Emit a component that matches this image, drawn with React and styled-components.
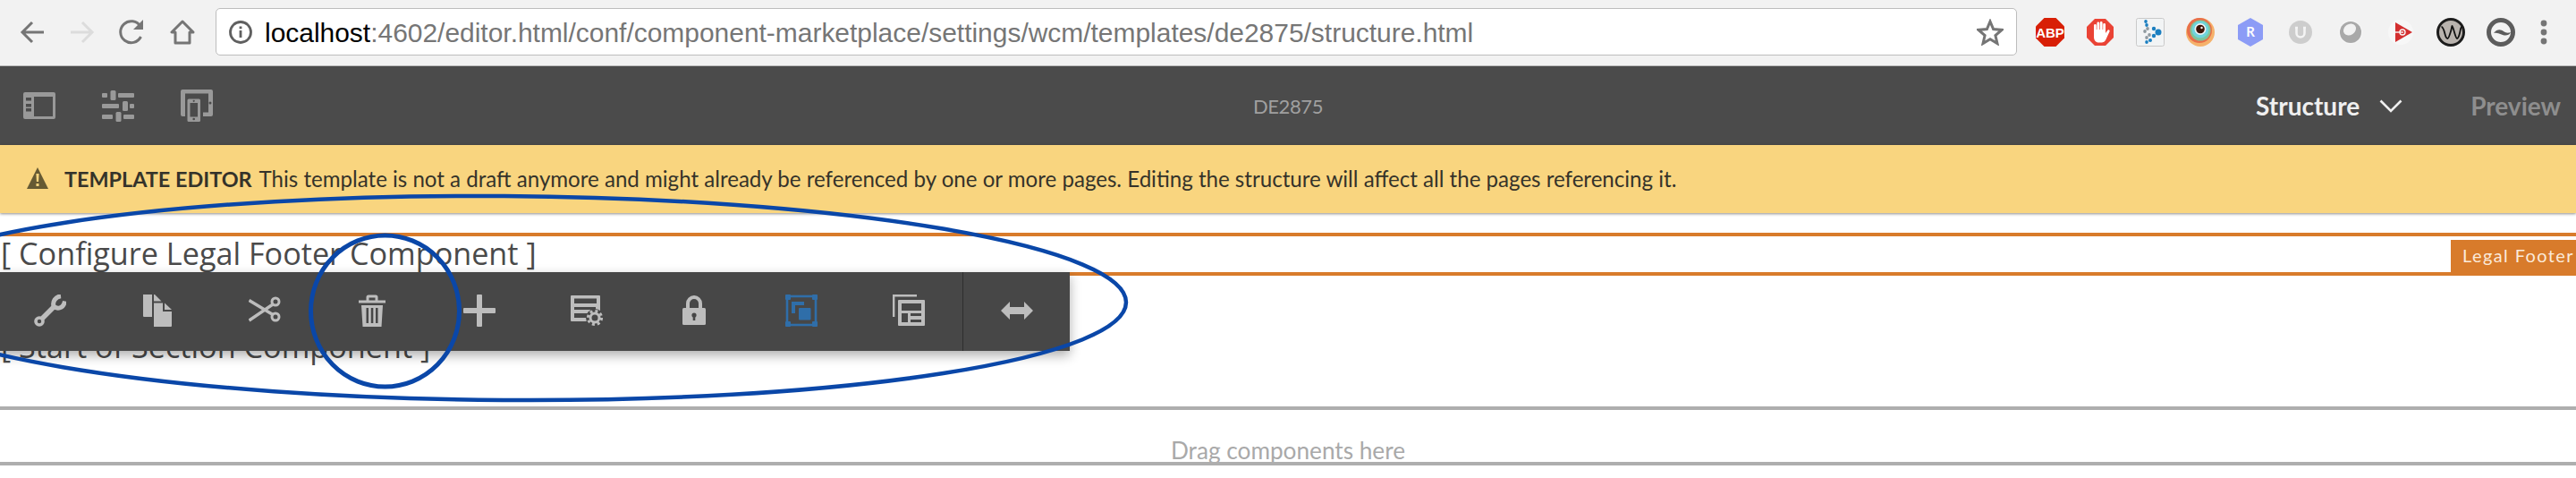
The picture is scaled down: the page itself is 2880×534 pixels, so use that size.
import React from "react";
import styled, { createGlobalStyle } from "styled-components";

const GlobalStyle = createGlobalStyle`
  html, body {
    margin: 0;
    padding: 0;
    background: #fff;
  }
`;

const Page = styled.div`
  position: relative;
  width: 2880px;
  height: 534px;
  overflow: hidden;
  background: #fff;
  font-family: "Lato", "Liberation Sans", sans-serif;
`;

const BrowserBar = styled.div`
  display: flex;
  align-items: center;
  box-sizing: border-box;
  height: 74px;
  padding: 0 16px 2px 8px;
  background: #f2f2f2;
  border-bottom: 1px solid #bcbcbc;
`;

const NavSlot = styled.div`
  display: flex;
  align-items: center;
  justify-content: center;
  flex: none;
  width: ${(p) => p.$w || 56}px;
`;

const AddressBox = styled.div`
  display: flex;
  align-items: center;
  flex: 1;
  box-sizing: border-box;
  height: 53px;
  margin: 0 9px;
  padding: 0 14px;
  background: #fff;
  border: 1px solid #bdbdbd;
  border-radius: 5px;
`;

const Url = styled.div`
  flex: 1;
  margin-left: 14px;
  padding-top: 2px;
  font-family: "Liberation Sans", Arial, sans-serif;
  font-size: 29.95px;
  color: #767676;
  white-space: nowrap;
`;

const Host = styled.span`
  color: #000;
`;

const EditorBar = styled.div`
  display: grid;
  grid-template-columns: 1fr auto 1fr;
  align-items: center;
  height: 88px;
  background: #4b4b4b;
`;

const BarTools = styled.div`
  display: flex;
  align-items: center;
`;

const BarTitle = styled.div`
  font-size: 22px;
  letter-spacing: -0.4px;
  color: #a0a0a0;
`;

const BarModes = styled.div`
  display: flex;
  align-items: center;
  justify-content: flex-end;
  padding-right: 17px;
  font-size: 28px;
  font-weight: 700;
`;

const Mode = styled.span`
  color: ${(p) => p.$muted ? "#8e8e8e" : "#efefef"};
  margin-left: ${(p) => p.$muted ? 76 : 0}px;
`;

const ModeChevron = styled.svg`
  margin-left: 22px;
`;

const Alert = styled.div`
  position: relative;
  display: flex;
  align-items: center;
  box-sizing: border-box;
  height: 76px;
  padding: 0 0 2px 30px;
  background: #f9d57f;
  box-shadow: 0 1px 3px rgba(0, 0, 0, 0.45);
  font-size: 24.1px;
  color: #35332a;
  white-space: nowrap;
`;

const AlertText = styled.div`
  margin-left: 18px;
`;

const AlertLabel = styled.b`
  font-size: 23.4px;
  font-weight: 700;
  margin-right: 8px;
`;

const Region = styled.div`
  position: relative;
  box-sizing: border-box;
  height: 48px;
  margin-top: 22px;
  border-top: 4px solid #d87b2b;
  border-bottom: 4px solid #d87b2b;
`;

const Placeholder = styled.div`
  padding-left: 1px;
  font-family: "Open Sans", "Liberation Sans", sans-serif;
  font-size: 34.2px;
  line-height: 38px;
  color: #4a4a4a;
  white-space: nowrap;
`;

const SectionText = styled(Placeholder)`
  margin-top: 60px;
`;

const Badge = styled.div`
  position: absolute;
  right: 0;
  bottom: 0;
  box-sizing: border-box;
  width: 140px;
  height: 36px;
  padding-left: 13px;
  background: #d87b2b;
  color: #fbeada;
  font-size: 20px;
  line-height: 34px;
  letter-spacing: 1.4px;
  white-space: nowrap;
`;

const DropZone = styled.div`
  box-sizing: border-box;
  height: 66px;
  margin-top: 48px;
  overflow: hidden;
  border-top: 4px solid #aeaeae;
  border-bottom: 4px solid #aeaeae;
  text-align: center;
  font-size: 26.2px;
  line-height: 34px;
  padding-top: 28px;
  color: #a9a9a9;
`;

const Toolbar = styled.div`
  position: absolute;
  top: 304px;
  left: -4px;
  display: flex;
  height: 88px;
  background: #474747;
  box-shadow: 0 5px 12px rgba(0, 0, 0, 0.32);
`;

const ToolButton = styled.div`
  display: flex;
  align-items: center;
  justify-content: center;
  box-sizing: border-box;
  width: 120px;
  padding-bottom: 2px;
  border-left: ${(p) => p.$divided ? "1px solid #2e2e2e" : "none"};
`;

const Annotations = styled.svg`
  position: absolute;
  top: 0;
  left: 0;
  pointer-events: none;
`;

const gray = "#bdbdbd";
const dark = "#474747";

const Ic = ({ children, w = 36, h = 36, ...rest }) => (
  <svg width={w} height={h} viewBox={`0 0 ${w} ${h}`} {...rest}>{children}</svg>
);

const BackIcon = ({ color }) => (
  <Ic w={28} h={28}>
    <path d="M27 14H3M14 3L3 14l11 11" fill="none" stroke={color} strokeWidth="3" />
  </Ic>
);

const ForwardIcon = ({ color }) => (
  <Ic w={28} h={28}>
    <path d="M1 14h24M14 3l11 11-11 11" fill="none" stroke={color} strokeWidth="3" />
  </Ic>
);

const ReloadIcon = () => (
  <Ic w={30} h={30}>
    <path d="M24.5 20a12 12 0 1 1 -.5-11.5" fill="none" stroke="#757575" strokeWidth="3" />
    <path d="M27 1v11H16z" fill="#757575" />
  </Ic>
);

const HomeIcon = () => (
  <Ic w={28} h={28}>
    <path d="M14 2L2 14h4v12h16V14h4z" fill="none" stroke="#757575" strokeWidth="3" strokeLinejoin="round" />
  </Ic>
);

const InfoIcon = () => (
  <Ic w={26} h={26}>
    <circle cx="13" cy="13" r="11.5" fill="none" stroke="#5f5f5f" strokeWidth="2.8" />
    <path d="M11.6 11h2.8v8h-2.8zM11.6 6.5h2.8v2.8h-2.8z" fill="#5f5f5f" />
  </Ic>
);

const StarIcon = () => (
  <Ic w={30} h={30}>
    <path d="M15 3l3.6 8.6 9.4.8-7.1 6.1 2.1 9.1L15 22.8l-8 4.8 2.1-9.1L2 12.4l9.4-.8z" fill="none" stroke="#757575" strokeWidth="3" />
  </Ic>
);

const AbpIcon = () => (
  <Ic w={32} h={32}>
    <path d="M9.5 0h13L32 9.5v13L22.5 32h-13L0 22.5v-13z" fill="#d81f06" />
    <text x="16" y="21.5" textAnchor="middle" fontFamily="Liberation Sans" fontWeight="700" fontSize="15" fill="#fff">ABP</text>
  </Ic>
);

const HandIcon = () => (
  <Ic w={30} h={30}>
    <path d="M9 0h12l9 9v12l-9 9H9l-9-9V9z" fill="#ea4335" />
    <path d="M8 13V7.5a1.4 1.4 0 0 1 2.8 0V12h.6V5a1.4 1.4 0 0 1 2.8 0v7h.6V4.5a1.4 1.4 0 0 1 2.8 0V12h.6V6.5a1.4 1.4 0 0 1 2.8 0V16l2.2-3a1.3 1.3 0 0 1 2.2 1.4L21 24a4.5 4.5 0 0 1-4 2.5h-3.5C10 26.5 8 24 8 20z" fill="#fff" />
  </Ic>
);

const TileIcon = () => (
  <Ic w={32} h={32}>
    <rect x=".5" y=".5" width="31" height="31" rx="2" fill="#f2f4f5" stroke="#c9c9c9" />
    {[[11, 4, "#1b7fc0"], [12, 8, "#1b7fc0"], [13, 12, "#8f9aa0"], [10, 15, "#8f9aa0"], [15, 19, "#8f9aa0"], [12, 22, "#8f9aa0"], [12, 27, "#1b7fc0"]].map(([x, y, c], i) => (
      <ellipse key={i} cx={x} cy={y} rx="1.8" ry="2" fill={c} />
    ))}
    <circle cx="25" cy="16" r="3.5" fill="#1b7fc0" />
    <circle cx="20" cy="12" r="2.2" fill="#1b7fc0" />
    <circle cx="20" cy="20" r="2.2" fill="#1b7fc0" />
    <circle cx="16" cy="25" r="2" fill="#1b7fc0" />
  </Ic>
);

const EyeIcon = () => (
  <Ic w={32} h={32}>
    <circle cx="16" cy="16" r="16" fill="#f5b26b" />
    <circle cx="15" cy="14" r="14" fill="#e86f4a" />
    <circle cx="16" cy="14" r="11.5" fill="#7fc49a" />
    <circle cx="16" cy="13" r="9.5" fill="#6fd4dc" />
    <circle cx="16" cy="12.5" r="6.5" fill="#f2f2f2" />
    <circle cx="16" cy="12.5" r="4.8" fill="#3c1408" />
    <circle cx="17.5" cy="11" r="1.2" fill="#fff" />
  </Ic>
);

const HexIcon = () => (
  <Ic w={28} h={32}>
    <path d="M14 0l14 8v16l-14 8-14-8V8z" fill="#8c9cf6" />
    <text x="14" y="21" textAnchor="middle" fontFamily="Lato" fontWeight="700" fontSize="15" fill="#fff">R</text>
  </Ic>
);

const UIcon = () => (
  <Ic w={26} h={26}>
    <circle cx="13" cy="13" r="13" fill="#cdcdcd" />
    <path d="M7 8h3M16 8h3M8.5 8v6a4.5 4.5 0 0 0 9 0V8" fill="none" stroke="#f4f4f4" strokeWidth="2.6" />
  </Ic>
);

const BallIcon = () => (
  <Ic w={28} h={28}>
    <circle cx="14" cy="14" r="13.5" fill="#f5f5f5" />
    <circle cx="14" cy="14" r="12" fill="#a9a9a9" />
    <ellipse cx="13" cy="11" rx="7.5" ry="6" fill="#f2f2f2" transform="rotate(-35 13 11)" />
  </Ic>
);

const PlayIcon = () => (
  <Ic w={28} h={30}>
    <circle cx="14" cy="15" r="14" fill="#f7f7f7" />
    <path d="M8 4l19 11L8 26z" fill="#d32f2f" />
    <path d="M5 15h12" stroke="#f7f7f7" strokeWidth="1.4" />
    <circle cx="16" cy="15" r="3" fill="none" stroke="#f7f7f7" strokeWidth="1.4" />
  </Ic>
);

const WaveIcon = () => (
  <Ic w={32} h={32}>
    <circle cx="16" cy="16" r="14.5" fill="#b9b3ae" stroke="#1c1c1c" strokeWidth="3" />
    <path d="M5.5 10c2 0 3 4 4 8s2 5 3 5 2-3 3.5-8 1-6 1.5-6 1 2 2.5 7 2 7 3 7 2-2 3-6 1-7 2.5-7" fill="none" stroke="#111" strokeWidth="1.8" />
  </Ic>
);

const SwirlIcon = () => (
  <Ic w={32} h={32}>
    <circle cx="16" cy="16" r="13.5" fill="none" stroke="#5c5c5c" strokeWidth="5" />
    <path d="M8 17c4-5 8-4 11-2s5 2 8 1c-2 4-6 4-9 3s-6-3-10-2z" fill="#5c5c5c" />
  </Ic>
);

const MenuDots = () => (
  <Ic w={8} h={28}>
    <circle cx="4" cy="4" r="3.4" fill="#757575" />
    <circle cx="4" cy="14" r="3.4" fill="#757575" />
    <circle cx="4" cy="24" r="3.4" fill="#757575" />
  </Ic>
);

const PanelIcon = () => (
  <Ic h={30}>
    <rect width="36" height="30" rx="2" fill="#999" />
    <rect x="12" y="5" width="21" height="22" fill="#4b4b4b" />
    <path d="M3 6h6v3.5H3zM3 13h6v3.5H3zM3 18h6v3.5H3z" fill="#4b4b4b" />
  </Ic>
);

const SlidersIcon = () => (
  <Ic h={35}>
    <g fill="#999">
      <rect x="0" y="3" width="6" height="5" rx="1" />
      <rect x="9.5" y="0" width="6" height="11" rx="1.5" />
      <rect x="18" y="3" width="18" height="5" rx="1" />
      <rect x="0" y="15" width="19" height="5" rx="1" />
      <rect x="23" y="12" width="6" height="11" rx="1.5" />
      <rect x="31" y="15" width="5" height="5" rx="1" />
      <rect x="0" y="27" width="12" height="5" rx="1" />
      <rect x="15.5" y="24" width="6" height="11" rx="1.5" />
      <rect x="24" y="27" width="12" height="5" rx="1" />
    </g>
  </Ic>
);

const DevicesIcon = () => (
  <Ic>
    <rect width="36" height="30" rx="2" fill="#999" />
    <rect x="5" y="4.5" width="26" height="21" fill="#4b4b4b" />
    <rect x="5" y="8" width="19" height="28" fill="#4b4b4b" />
    <rect x="24" y="25" width="1" height="5" fill="#4b4b4b" />
    <rect x="7.5" y="10.5" width="14.5" height="25.5" rx="1.5" fill="#999" />
    <rect x="10.5" y="15" width="8.5" height="15.5" fill="#4b4b4b" />
    <circle cx="33" cy="15" r="1.5" fill="#4b4b4b" />
    <circle cx="14.7" cy="12.8" r="1.1" fill="#4b4b4b" />
    <circle cx="14.7" cy="33" r="1.3" fill="#4b4b4b" />
  </Ic>
);

const WarningIcon = () => (
  <Ic w={24} h={24}>
    <path d="M12 0l12 24H0z" fill="#665a33" />
    <path d="M10.4 7h3.2l-.5 9h-2.2zM10.5 18h3v3h-3z" fill="#f9d57f" />
  </Ic>
);

const WrenchIcon = () => (
  <Ic>
    <g fill="none" stroke={gray}>
      <path d="M8 28L23 13" strokeWidth="5.5" />
      <circle cx="6" cy="30" r="4" strokeWidth="3.6" />
      <path d="M30 1.8C24 2.5 20.5 8 22 13c4 4 11 2.5 12.5-5.5" strokeWidth="5" />
    </g>
  </Ic>
);

const CopyIcon = () => (
  <Ic>
    <g fill={gray}>
      <path d="M2 0h10v25H3a1 1 0 0 1-1-1z" />
      <path d="M14 0h1l7.5 7.5H14z" />
      <path d="M14 9.5h10v9.5h10v16a1 1 0 0 1-1 1H14z" />
      <path d="M26 9.5l8 7.5h-8z" />
    </g>
  </Ic>
);

const ScissorsIcon = () => (
  <Ic>
    <g fill="none" stroke={gray}>
      <circle cx="30" cy="8" r="4" strokeWidth="3" />
      <circle cx="30" cy="25" r="4" strokeWidth="3" />
      <path d="M0.5 6.5L27 22.5M0.5 29L27 11" strokeWidth="3.4" />
    </g>
  </Ic>
);

const TrashIcon = () => (
  <Ic>
    <path d="M3 6.5h8.5V3a2.5 2.5 0 0 1 2.5-2.5h8A2.5 2.5 0 0 1 24.5 3v3.5H33V9.5H3zM14.5 3.5v3h7v-3z" fill={gray} fillRule="evenodd" />
    <path d="M6 12h24l-1.5 24h-21z" fill={gray} />
    <path d="M11.5 15h2.5v17h-2.5zM16.8 15h2.5v17h-2.5zM22 15h2.5v17H22z" fill={dark} />
  </Ic>
);

const PlusIcon = () => (
  <Ic>
    <path d="M15 1a1 1 0 0 1 1-1h4a1 1 0 0 1 1 1v14h14a1 1 0 0 1 1 1v4a1 1 0 0 1-1 1H21v14a1 1 0 0 1-1 1h-4a1 1 0 0 1-1-1V21H1a1 1 0 0 1-1-1v-4a1 1 0 0 1 1-1h14z" fill={gray} />
  </Ic>
);

const FormGearIcon = () => (
  <Ic>
    <rect x="0" y="1" width="33" height="29" rx="1" fill={gray} />
    <rect x="4" y="4.5" width="25" height="5.5" fill={dark} />
    <rect x="4" y="14" width="24" height="3" fill={dark} />
    <rect x="4" y="21" width="17" height="5" fill={dark} />
    <circle cx="27" cy="26" r="10" fill={dark} />
    <circle cx="27" cy="26" r="5" fill="none" stroke={gray} strokeWidth="3" />
    <circle cx="27" cy="26" r="7.6" fill="none" stroke={gray} strokeWidth="3" strokeDasharray="3 3" />
  </Ic>
);

const LockIcon = () => (
  <Ic>
    <path d="M11 17V10a7 7 0 0 1 14 0v7" fill="none" stroke={gray} strokeWidth="4" />
    <rect x="5" y="15" width="26" height="19" rx="1.5" fill={gray} />
    <circle cx="18" cy="23" r="2.6" fill={dark} />
    <rect x="16.7" y="23" width="2.6" height="6" fill={dark} />
  </Ic>
);

const StyleIcon = () => (
  <Ic>
    <g fill="#2f6ea9">
      <rect x="2" y="2" width="32" height="32" fill="none" stroke="#2f6ea9" strokeWidth="2.6" />
      <rect x="0" y="0" width="6" height="6" rx="1" />
      <rect x="30" y="0" width="6" height="6" rx="1" />
      <rect x="0" y="30" width="6" height="6" rx="1" />
      <rect x="30" y="30" width="6" height="6" rx="1" />
      <path d="M7 8h14v4H11v9H7z" />
      <rect x="15" y="15" width="13.5" height="13.5" rx="1" />
    </g>
  </Ic>
);

const LayoutIcon = () => (
  <Ic>
    <path d="M1.2 25V1.2H27" fill="none" stroke={gray} strokeWidth="2.4" />
    <rect x="6" y="6" width="30" height="29" rx="1" fill={gray} />
    <rect x="10" y="10" width="22" height="8" fill={dark} />
    <rect x="10" y="21" width="7" height="10" fill={dark} />
    <rect x="20" y="21" width="12" height="3" fill={dark} />
    <rect x="20" y="28" width="12" height="3" fill={dark} />
  </Ic>
);

const ArrowsIcon = () => (
  <Ic>
    <path d="M0 18L10 8v6h16V8l10 10-10 10v-6H10v6z" fill={gray} />
  </Ic>
);

const tools = [WrenchIcon, CopyIcon, ScissorsIcon, TrashIcon, PlusIcon, FormGearIcon, LockIcon, StyleIcon, LayoutIcon];
const extensions = [AbpIcon, HandIcon, TileIcon, EyeIcon, HexIcon, UIcon, BallIcon, PlayIcon, WaveIcon, SwirlIcon];

const App = () => (
  <Page>
    <GlobalStyle />
    <BrowserBar>
      <NavSlot><BackIcon color="#757575" /></NavSlot>
      <NavSlot><ForwardIcon color="#dcdcdc" /></NavSlot>
      <NavSlot><ReloadIcon /></NavSlot>
      <NavSlot><HomeIcon /></NavSlot>
      <AddressBox>
        <InfoIcon />
        <Url>
          <Host>localhost</Host>:4602/editor.html/conf/component-marketplace/settings/wcm/templates/de2875/structure.html
        </Url>
        <StarIcon />
      </AddressBox>
      {extensions.map((Icon, i) => (
        <NavSlot key={i}><Icon /></NavSlot>
      ))}
      <NavSlot $w={40}><MenuDots /></NavSlot>
    </BrowserBar>
    <EditorBar>
      <BarTools>
        <NavSlot $w={88}><PanelIcon /></NavSlot>
        <NavSlot $w={88}><SlidersIcon /></NavSlot>
        <NavSlot $w={88}><DevicesIcon /></NavSlot>
      </BarTools>
      <BarTitle>DE2875</BarTitle>
      <BarModes>
        <Mode>Structure</Mode>
        <ModeChevron width="26" height="15" viewBox="0 0 26 15">
          <path d="M1.5 1.5L13 13 24.5 1.5" fill="none" stroke="#efefef" strokeWidth="2.6" />
        </ModeChevron>
        <Mode $muted>Preview</Mode>
      </BarModes>
    </EditorBar>
    <Alert>
      <WarningIcon />
      <AlertText>
        <AlertLabel>TEMPLATE EDITOR</AlertLabel>
        This template is not a draft anymore and might already be referenced by one or more pages. Editing the structure will affect all the pages referencing it.
      </AlertText>
    </Alert>
    <Region>
      <Placeholder>[ Configure Legal Footer Component ]</Placeholder>
      <Badge>Legal Footer</Badge>
    </Region>
    <SectionText>[ Start of Section Component ]</SectionText>
    <DropZone>Drag components here</DropZone>
    <Toolbar>
      {tools.map((Icon, i) => (
        <ToolButton key={i}><Icon /></ToolButton>
      ))}
      <ToolButton $divided><ArrowsIcon /></ToolButton>
    </Toolbar>
    <Annotations width="2880" height="534" viewBox="0 0 2880 534">
      <ellipse cx="563" cy="333" rx="696" ry="114" fill="none" stroke="#0a47a8" strokeWidth="4.5" transform="rotate(0.4 563 333)" />
      <ellipse cx="430.5" cy="347.5" rx="83" ry="84.5" fill="none" stroke="#0a47a8" strokeWidth="5" />
    </Annotations>
  </Page>
);

export default App;
